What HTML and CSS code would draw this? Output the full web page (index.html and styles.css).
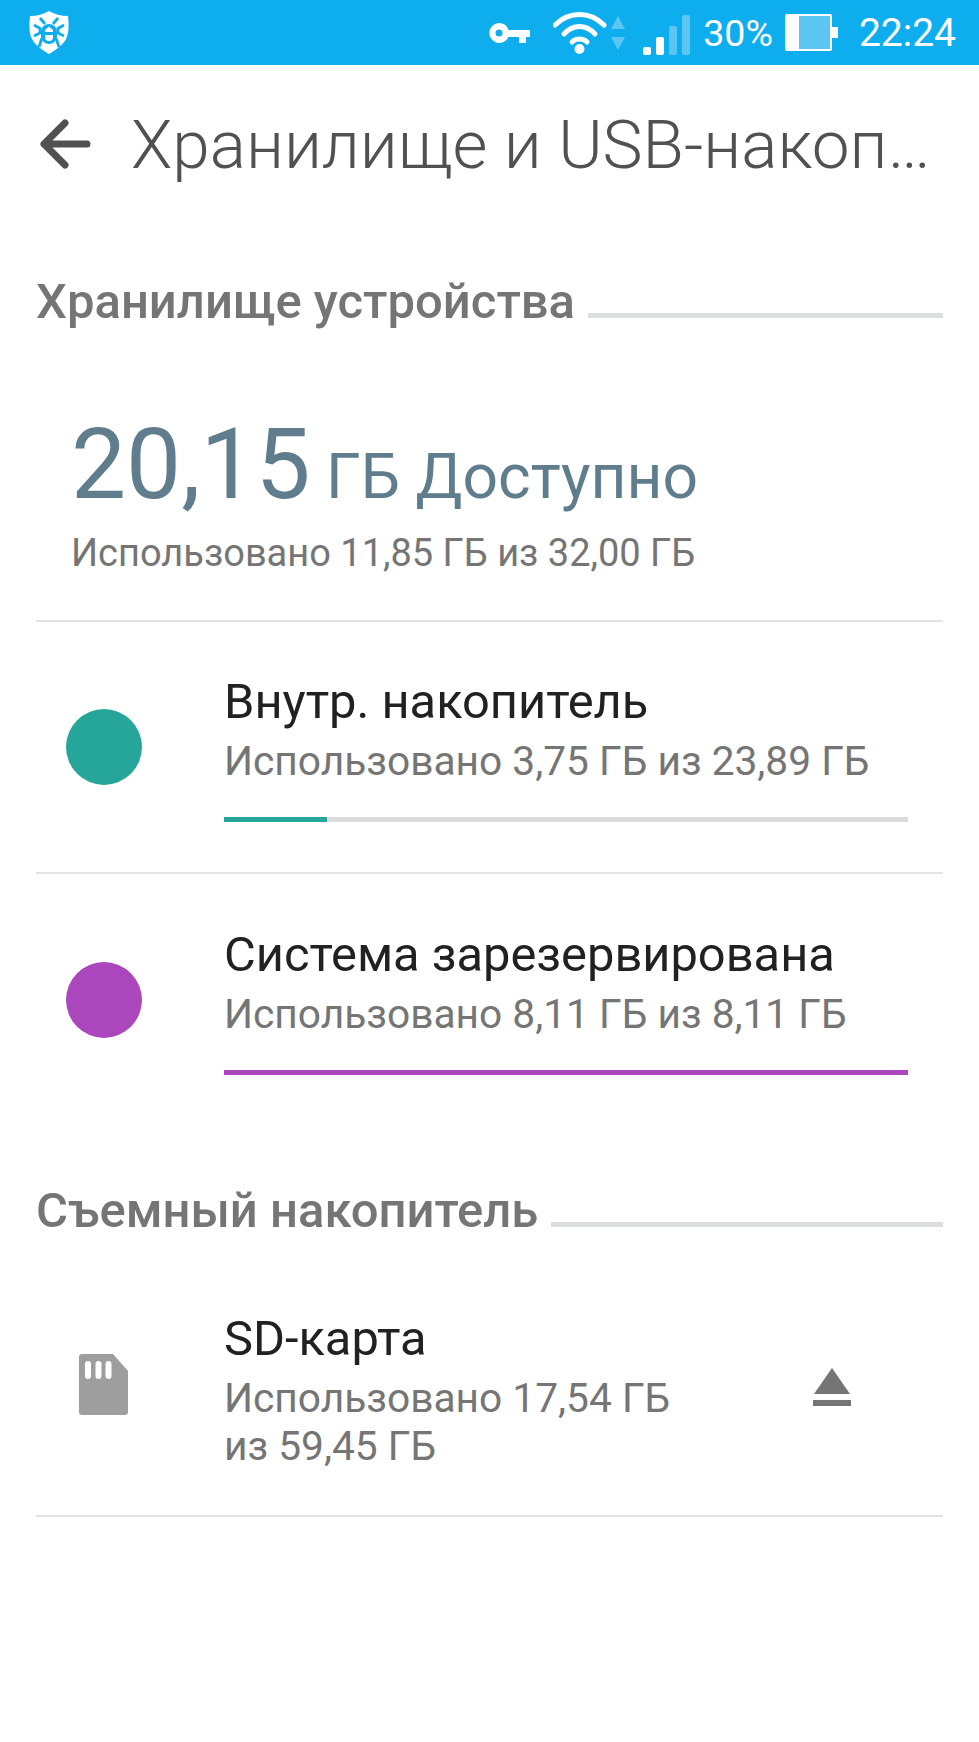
FILE: index.html
```html
<!DOCTYPE html>
<html lang="ru">
<head>
<meta charset="UTF-8" />
<meta name="viewport" content="width=device-width, initial-scale=1" />
<title>Хранилище и USB-накопители</title>
<link rel="stylesheet" href="styles.css">
</head>
<body>
  <header class="status-bar">
    <svg class="shield" viewBox="0 0 40 43" aria-hidden="true">
      <path class="shield-body" d="M20 0 C25 3 32 5 39 5 C40 14 40 22 37 28 C34 34 27 39 20 43 C13 39 6 34 3 28 C0 22 0 14 1 5 C8 5 15 3 20 0 Z"/>
      <path class="bug-line" d="M11 7 L16 13 M29 7 L24 13 M5 14 L12 18 M35 14 L28 18 M5 25 L11 22 V17 M35 25 L29 22 V17 M10 36 L13 27 M30 36 L27 27"/>
      <path class="shield-bug" d="M12 21 a8 8 0 0 1 16 0 v4 a8 8 0 0 1 -16 0 Z"/>
      <path class="bug-face" d="M20 15.5 L24 19 V21 H16 V19 Z"/>
      <path class="bug-face" d="M16 24 H24 V26 a4 4 0 0 1 -8 0 Z"/>
    </svg>
    <div class="status-right">
      <svg class="ic-key" viewBox="0 0 42 22" aria-hidden="true">
        <path fill-rule="evenodd" d="M11 1 a10 10 0 0 1 9.5 7 H42 V15 H38 V21 H31 V15 H20.5 A10 10 0 1 1 11 1 Z M11 7.5 a3.5 3.5 0 1 0 0 7 a3.5 3.5 0 0 0 0 -7 Z"/>
      </svg>
      <svg class="ic-wifi" viewBox="0 0 72 42" aria-hidden="true">
        <g class="wifi-arcs">
          <path d="M2 13 C16 -1 37 -1 51 13"/>
          <path d="M11 22 C20 12 33 12 42 22"/>
          <path d="M19 30 C23 26 30 26 34 30"/>
        </g>
        <circle class="wifi-dot" cx="26.5" cy="37" r="5"/>
        <path class="wifi-tri" d="M65 4 L72 17 H58 Z M58 25 H72 L65 38 Z"/>
      </svg>
      <div class="signal" aria-hidden="true">
        <span class="sig sig-1"></span>
        <span class="sig sig-2"></span>
        <span class="sig sig-3"></span>
        <span class="sig sig-4"></span>
      </div>
      <span class="status-text pct">30%</span>
      <div class="battery" aria-hidden="true"><div class="battery-empty"></div></div>
      <span class="status-text clock">22:24</span>
    </div>
  </header>

  <div class="toolbar">
    <svg class="back" viewBox="0 0 52 52" aria-hidden="true">
      <path d="M48 26 H5 M26 5 L5 26 L26 47"/>
    </svg>
    <h1 class="toolbar-title">Хранилище и USB-накоп…</h1>
  </div>

  <section class="section-head first">
    <h2>Хранилище устройства</h2>
    <span class="head-line"></span>
  </section>

  <section class="summary">
    <p class="free"><span class="free-num">20,15</span> ГБ Доступно</p>
    <p class="used">Использовано 11,85 ГБ из 32,00 ГБ</p>
  </section>

  <div class="row volume">
    <span class="dot teal"></span>
    <div class="row-body">
      <div class="row-title">Внутр. накопитель</div>
      <div class="row-sub">Использовано 3,75 ГБ из 23,89 ГБ</div>
      <div class="bar"><div class="bar-fill teal" style="width: 15.1%"></div></div>
    </div>
  </div>

  <div class="row volume no-line">
    <span class="dot purple"></span>
    <div class="row-body">
      <div class="row-title">Система зарезервирована</div>
      <div class="row-sub">Использовано 8,11 ГБ из 8,11 ГБ</div>
      <div class="bar"><div class="bar-fill purple" style="width: 100%"></div></div>
    </div>
  </div>

  <section class="section-head second">
    <h2>Съемный накопитель</h2>
    <span class="head-line"></span>
  </section>

  <div class="row sd">
    <svg class="ic-sd" viewBox="0 0 49 61" aria-hidden="true">
      <path fill-rule="evenodd" d="M3 0 H34 L49 17 V58 a3 3 0 0 1 -3 3 H3 a3 3 0 0 1 -3 -3 V3 a3 3 0 0 1 3 -3 Z M9 7 a3 3 0 0 0 -3 3 V22 a3 3 0 0 0 6 0 V10 a3 3 0 0 0 -3 -3 Z M19.5 7 a3 3 0 0 0 -3 3 V22 a3 3 0 0 0 6 0 V10 a3 3 0 0 0 -3 -3 Z M29.5 7 a3 3 0 0 0 -3 3 V22 a3 3 0 0 0 6 0 V10 a3 3 0 0 0 -3 -3 Z"/>
    </svg>
    <div class="row-body sd-body">
      <div class="row-title">SD-карта</div>
      <div class="row-sub">Использовано 17,54 ГБ<br>из 59,45 ГБ</div>
    </div>
    <svg class="ic-eject" viewBox="0 0 38 38" aria-hidden="true">
      <path d="M19 0 L37 26 H1 Z M0 32 H38 V38 H0 Z"/>
    </svg>
  </div>
</body>
</html>
```

FILE: styles.css
```css
/* Reset & base */
*, *::before, *::after {
  box-sizing: border-box;
}

body {
  margin: 0;
  width: 979px;
  min-height: 1742px;
  background: #fff;
  font-family: Roboto, 'Noto Sans', sans-serif;
  overflow: hidden;
}

h1, h2, p {
  margin: 0;
  font-weight: 400;
}

/* Status bar */
.status-bar {
  height: 65px;
  background: #0eaeee;
  display: flex;
  align-items: center;
  justify-content: space-between;
  padding: 0 23px 0 29px;
}

.shield {
  width: 40px;
  height: 43px;
}

.shield-body {
  fill: #fff;
}

.shield-bug {
  fill: #0eaeee;
}

.bug-face {
  fill: #fff;
}

.bug-line {
  fill: none;
  stroke: #0eaeee;
  stroke-width: 2.8;
}

.status-right {
  display: flex;
  align-items: center;
  color: #fff;
}

.status-text {
  font-size: 39px;
  color: #fff;
}

.ic-key {
  width: 42px;
  height: 22px;
  fill: #fff;
  margin-right: 23px;
}

.ic-wifi {
  width: 72px;
  height: 42px;
  margin-right: 18px;
}

.wifi-arcs path {
  fill: none;
  stroke: #fff;
  stroke-width: 5;
  stroke-linecap: round;
}

.wifi-dot {
  fill: #fff;
}

.wifi-tri {
  fill: #5cc6f2;
}

.signal {
  display: flex;
  align-items: flex-end;
  gap: 5px;
  height: 40px;
  margin-top: 4px;
  margin-right: 13px;
}

.sig {
  display: block;
  width: 8px;
  border-radius: 2px;
  background: #fff;
}

.sig-1 { height: 8px; }
.sig-2 { height: 18px; }
.sig-3 { height: 29px; background: #5cc6f2; }
.sig-4 { height: 40px; background: #5cc6f2; }

.pct {
  font-size: 37.5px;
  margin-right: 12px;
}

.battery {
  position: relative;
  width: 47px;
  height: 37px;
  background: #fff;
  border-radius: 2px;
  padding: 2px;
  display: flex;
  justify-content: flex-end;
  margin-right: 27px;
}

.battery::after {
  content: "";
  position: absolute;
  right: -6px;
  top: 13px;
  width: 6px;
  height: 11px;
  background: #fff;
}

.battery-empty {
  width: 31px;
  height: 100%;
  background: #5cc6f2;
}

/* Toolbar */
.toolbar {
  height: 158px;
  display: flex;
  align-items: center;
  padding: 0 39px;
}

.back {
  width: 52px;
  height: 52px;
  flex: none;
  fill: none;
  stroke: #515151;
  stroke-width: 7;
  stroke-linecap: round;
  stroke-linejoin: round;
  margin-right: 40px;
}

.toolbar-title {
  font-size: 67.5px;
  font-weight: 300;
  color: #515151;
  white-space: nowrap;
}

/* Section headers */
.section-head {
  display: flex;
  align-items: center;
  gap: 13px;
  margin: 0 36px;
}

.section-head h2 {
  font-size: 49px;
  line-height: 57px;
  font-weight: 500;
  color: #757575;
  white-space: nowrap;
}

.head-line {
  flex: 1;
  height: 5px;
  background: #dcdfdf;
  margin-top: 28px;
}

.first {
  margin-top: 50px;
}

.second {
  margin-top: 56px;
}

/* Summary */
.summary {
  height: 292px;
  padding: 85px 35px 0;
  margin: 0 36px;
  border-bottom: 2px solid #e3e3e3;
}

.free {
  font-size: 62.4px;
  color: #5f7d8c;
  line-height: 100px;
  white-space: nowrap;
}

.free-num {
  font-size: 98px;
}

.used {
  font-size: 38px;
  line-height: 46px;
  color: #757575;
  margin-top: 3px;
}

/* Rows */
.row {
  display: flex;
  align-items: center;
  margin: 0 36px;
  border-bottom: 2px solid #e3e3e3;
}

.volume {
  height: 252px;
}

.no-line {
  border-bottom: 0;
}

.dot {
  width: 76px;
  height: 76px;
  border-radius: 50%;
  flex: none;
  margin: 0 82px 0 30px;
}

.teal { background: #26a69a; }
.purple { background: #ab47bc; }

.row-body {
  flex: 1;
}

.row-title {
  font-size: 48.8px;
  line-height: 57px;
  color: #212121;
}

.row-sub {
  font-size: 40.7px;
  line-height: 48px;
  color: #757575;
  margin-top: 7px;
}

.bar {
  height: 5px;
  width: 684px;
  background: #dcdcdc;
  margin-top: 32px;
}

.bar-fill {
  height: 100%;
}

/* SD card */
.sd {
  height: 253px;
  margin-top: 25px;
}

.sd-body {
  flex: none;
  width: 589px;
}

.ic-sd {
  width: 49px;
  height: 61px;
  flex: none;
  fill: #9e9e9e;
  margin: 0 96px 10px 43px;
}

.ic-eject {
  width: 38px;
  height: 38px;
  fill: #757575;
  flex: none;
  margin-bottom: 6px;
}
```
